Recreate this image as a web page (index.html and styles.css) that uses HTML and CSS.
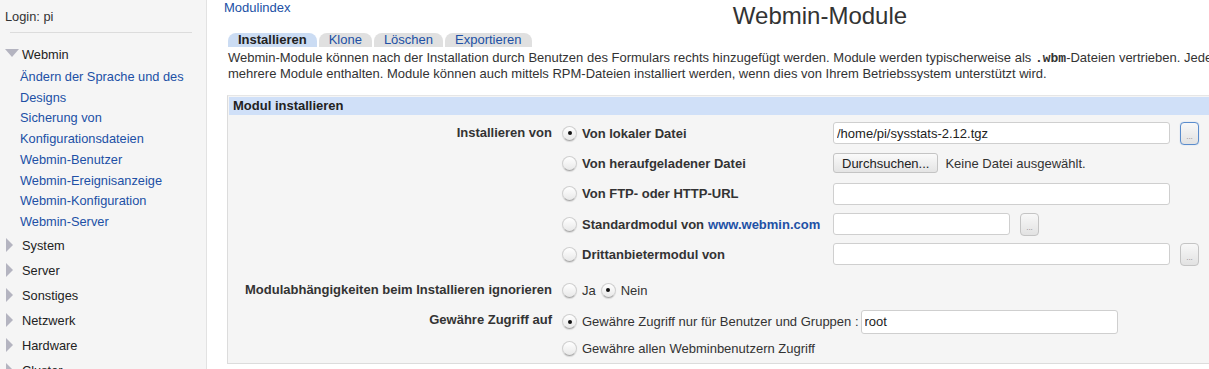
FILE: index.html
```html
<!DOCTYPE html>
<html lang="de">
<head>
  <meta charset="UTF-8">
  <title>Webmin-Module</title>
  <link rel="stylesheet" href="styles.css">
</head>
<body>
  <div class="page">
    <div class="sidebar">
      <div class="login">Login: pi</div>
      <hr class="divider">
      <div class="category open">
        <span class="arrow-down"></span>Webmin
      </div>
      <ul class="links">
        <li><a href="#">Ändern der Sprache und des Designs</a></li>
        <li><a href="#">Sicherung von Konfigurationsdateien</a></li>
        <li><a href="#">Webmin-Benutzer</a></li>
        <li><a href="#">Webmin-Ereignisanzeige</a></li>
        <li><a href="#">Webmin-Konfiguration</a></li>
        <li><a href="#">Webmin-Server</a></li>
      </ul>
      <div class="category"><span class="arrow-right"></span>System</div>
      <div class="category"><span class="arrow-right"></span>Server</div>
      <div class="category"><span class="arrow-right"></span>Sonstiges</div>
      <div class="category"><span class="arrow-right"></span>Netzwerk</div>
      <div class="category"><span class="arrow-right"></span>Hardware</div>
      <div class="category"><span class="arrow-right"></span>Cluster</div>
    </div>

    <div class="main">
      <div class="header">
        <a class="index-link" href="#">Modulindex</a>
        <h1>Webmin-Module</h1>
      </div>

      <div class="tabs">
        <span class="tab active">Installieren</span>
        <span class="tab">Klone</span>
        <span class="tab">Löschen</span>
        <span class="tab">Exportieren</span>
      </div>

      <p class="intro">Webmin-Module können nach der Installation durch Benutzen des Formulars rechts hinzugefügt werden. Module werden typischerweise als <code>.wbm</code>-Dateien vertrieben. Jede Datei kann ein oder<br>mehrere Module enthalten. Module können auch mittels RPM-Dateien installiert werden, wenn dies von Ihrem Betriebssystem unterstützt wird.</p>

      <form class="panel">
        <div class="panel-title">Modul installieren</div>
        <div class="panel-body">
          <div class="label">Installieren von</div>
          <div class="options">
            <label class="opt"><input type="radio" name="source" checked>Von lokaler Datei</label>
            <div class="field">
              <input class="text wide" type="text" value="/home/pi/sysstats-2.12.tgz">
              <button type="button" class="dots focused">...</button>
            </div>

            <label class="opt"><input type="radio" name="source">Von heraufgeladener Datei</label>
            <div class="field">
              <button type="button" class="browse">Durchsuchen...</button>
              <span class="nofile">Keine Datei ausgewählt.</span>
            </div>

            <label class="opt"><input type="radio" name="source">Von FTP- oder HTTP-URL</label>
            <div class="field">
              <input class="text wide" type="text">
            </div>

            <label class="opt"><input type="radio" name="source">Standardmodul von <a href="#">www.webmin.com</a></label>
            <div class="field">
              <input class="text short" type="text">
              <button type="button" class="dots">...</button>
            </div>

            <label class="opt"><input type="radio" name="source">Drittanbietermodul von</label>
            <div class="field">
              <input class="text wide" type="text">
              <button type="button" class="dots">...</button>
            </div>
          </div>

          <div class="label gap">Modulabhängigkeiten beim Installieren ignorieren</div>
          <div class="inline gap">
            <label class="plain"><input type="radio" name="nodeps">Ja</label>
            <label class="plain"><input type="radio" name="nodeps" checked>Nein</label>
          </div>

          <div class="label">Gewähre Zugriff auf</div>
          <div class="access">
            <div class="inline">
              <label class="plain"><input type="radio" name="grant" checked>Gewähre Zugriff nur für Benutzer und Gruppen :</label>
              <input class="text users" type="text" value="root">
            </div>
            <div class="inline last">
              <label class="plain"><input type="radio" name="grant">Gewähre allen Webminbenutzern Zugriff</label>
            </div>
          </div>
        </div>
      </form>
    </div>
  </div>
</body>
</html>
```

FILE: styles.css
```css
html, body {
  margin: 0;
  overflow: hidden;
}
body {
  font-family: "Liberation Sans", Arial, sans-serif;
  font-size: 13px;
  color: #333;
  background: white;
}
a {
  color: #2150a5;
  text-decoration: none;
}
.page {
  display: flex;
  height: 369px;
}

/* left menu */
.sidebar {
  width: 206px;
  flex-shrink: 0;
  background: #f5f5f5;
  border-right: 1px solid #e2e2e2;
  font-size: 12.8px;
  overflow: hidden;
}
.login {
  padding: 8px 0 0 5px;
  line-height: 17px;
}
.divider {
  border: none;
  border-top: 1px solid #dcdcdc;
  margin: 7px 14px 0 10px;
}
.category {
  display: flex;
  align-items: center;
  height: 25px;
  padding-left: 6px;
  color: #222;
}
.category.open {
  margin-top: 9px;
  height: 24px;
  padding-left: 5px;
}
.arrow-down {
  width: 0;
  height: 0;
  border-left: 7px solid transparent;
  border-right: 7px solid transparent;
  border-top: 8px solid #b4b4c0;
  margin-right: 3px;
  margin-top: -3px;
}
.arrow-right {
  width: 0;
  height: 0;
  border-top: 7px solid transparent;
  border-bottom: 7px solid transparent;
  border-left: 7px solid #b4b4c0;
  margin-right: 9px;
}
.links {
  list-style: none;
  margin: 1px 0 0 0;
  padding: 0 12px 0 20px;
  line-height: 20.7px;
}

/* main area */
.main {
  width: 1200px;
  flex-shrink: 0;
  padding-left: 13px;
}
.header {
  position: relative;
  height: 32px;
}
.index-link {
  position: absolute;
  left: 4px;
  top: 0;
  line-height: 16px;
}
h1 {
  margin: 0;
  padding-top: 2px;
  text-align: center;
  font-size: 24px;
  font-weight: normal;
  line-height: 28px;
  color: #333;
}
.tabs {
  display: flex;
  gap: 2px;
  margin-left: 8px;
  height: 15px;
  align-items: flex-end;
}
.tab {
  background: #e0e0e0;
  color: #2150a5;
  border-radius: 8px 8px 0 0;
  padding: 0 10px;
  line-height: 14px;
  height: 14px;
}
.tab.active {
  background: #cbdcf3;
  color: #222;
  font-weight: bold;
}
.intro {
  margin: 3px 0 0 8px;
  line-height: 15px;
  white-space: nowrap;
}
.intro code {
  font-family: "Liberation Mono", monospace;
  font-size: 13px;
  font-weight: bold;
}

/* form panel */
.panel {
  margin: 14px 0 0 7px;
  border: 1px solid #dcdcdc;
  border-top-color: #e6e6e6;
  background: #f5f5f5;
  padding: 1px;
}
.panel-title {
  background: #d0e0f8;
  font-weight: bold;
  line-height: 18px;
  padding-left: 4px;
  color: #222;
}
.panel-body {
  display: grid;
  grid-template-columns: 333px 1fr;
  padding: 3px 0 1px 0;
}
.label {
  text-align: right;
  padding-right: 10px;
  font-weight: bold;
  line-height: 30px;
}
.gap {
  margin-top: 6px;
}
.options {
  display: grid;
  grid-template-columns: 271px auto;
  grid-auto-rows: 30.3px;
  align-items: center;
}
.opt {
  display: flex;
  align-items: center;
  font-weight: bold;
  white-space: nowrap;
}
.opt a {
  margin-left: 4px;
}
.field {
  display: flex;
  align-items: center;
}
.inline {
  display: flex;
  align-items: center;
  height: 30px;
}
.access .inline {
  height: 33px;
}
.access .inline.last {
  height: 20px;
  align-items: flex-start;
  padding-top: 3px;
}
.plain {
  display: flex;
  align-items: center;
  margin-right: 5px;
}
.access .plain {
  margin-right: 2px;
}

/* radios */
input[type="radio"] {
  appearance: none;
  width: 15px;
  height: 15px;
  margin: 0 5px 0 0;
  border-radius: 50%;
  border: 1px solid #cfcfcf;
  border-bottom-color: #a8a8a8;
  background: linear-gradient(#ffffff, #e8e8e8);
  box-shadow: 0 1px 1px rgba(0,0,0,0.12);
  position: relative;
  flex-shrink: 0;
}
input[type="radio"]:checked::after {
  content: "";
  position: absolute;
  left: 4.5px;
  top: 4.5px;
  width: 4px;
  height: 4px;
  border-radius: 50%;
  background: #111;
}

/* text fields and buttons */
.text {
  height: 22px;
  box-sizing: border-box;
  border: 1px solid #cfcfcf;
  border-radius: 3px;
  background: white;
  font-family: "Liberation Sans", Arial, sans-serif;
  font-size: 13px;
  color: #222;
  padding: 0 3px;
}
.wide {
  width: 337px;
}
.short {
  width: 177px;
}
.users {
  width: 257px;
  height: 24px;
}
.dots {
  width: 19px;
  height: 23px;
  margin-left: 10px;
  padding: 0;
  border: 1px solid #c4c4c4;
  border-radius: 4px;
  background: linear-gradient(#f8f8f8, #e2e2e2);
  color: #888;
  font-size: 8px;
  line-height: 28px;
  font-family: "Liberation Sans", Arial, sans-serif;
}
.dots.focused {
  border-color: #5a8ccc;
  box-shadow: 0 0 1px #8ab0e0;
}
.browse {
  height: 20px;
  padding: 0 8px;
  border: 1px solid #c4c4c4;
  border-radius: 3px;
  background: linear-gradient(#fafafa, #e4e4e4);
  font-family: "Liberation Sans", Arial, sans-serif;
  font-size: 13px;
  color: #222;
}
.nofile {
  margin-left: 7px;
}
```
